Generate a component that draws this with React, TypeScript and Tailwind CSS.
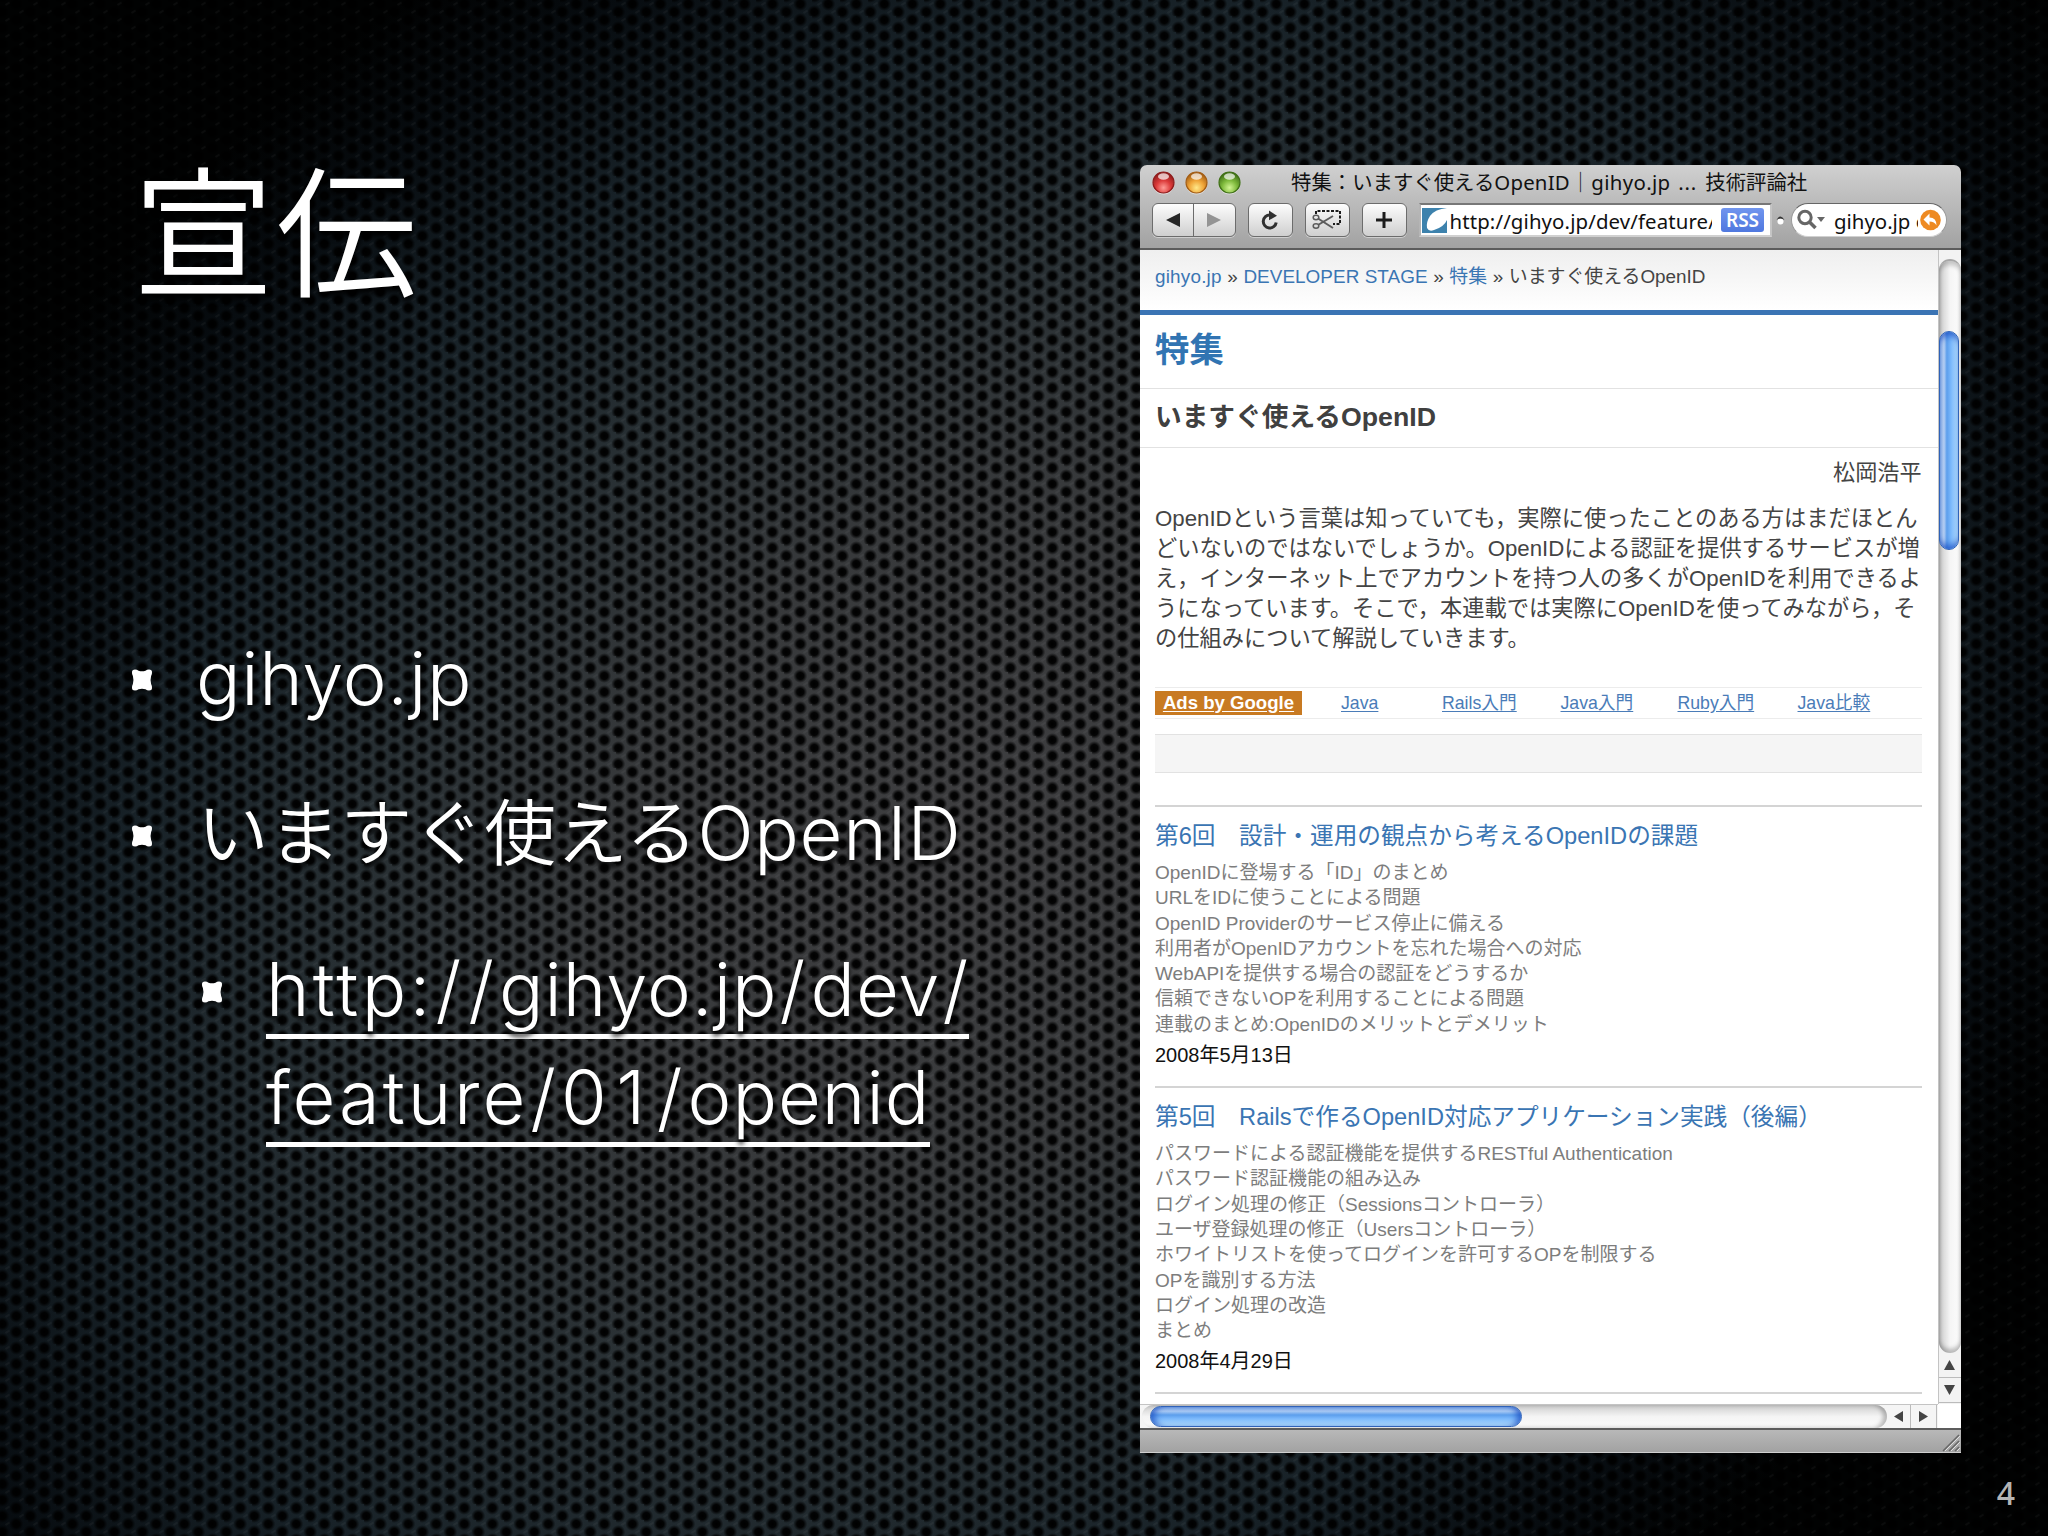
import React from 'react';

interface Article {
  title: string;
  topics: string[];
  date: string;
}

const INTRO_LINES = [
  'OpenIDという言葉は知っていても，実際に使ったことのある方はまだほとん',
  'どいないのではないでしょうか。OpenIDによる認証を提供するサービスが増',
  'え，インターネット上でアカウントを持つ人の多くがOpenIDを利用できるよ',
  'うになっています。そこで，本連載では実際にOpenIDを使ってみながら，そ',
  'の仕組みについて解説していきます。',
];

const ARTICLES: Article[] = [
  {
    title: '第6回　設計・運用の観点から考えるOpenIDの課題',
    topics: [
      'OpenIDに登場する「ID」のまとめ',
      'URLをIDに使うことによる問題',
      'OpenID Providerのサービス停止に備える',
      '利用者がOpenIDアカウントを忘れた場合への対応',
      'WebAPIを提供する場合の認証をどうするか',
      '信頼できないOPを利用することによる問題',
      '連載のまとめ:OpenIDのメリットとデメリット',
    ],
    date: '2008年5月13日',
  },
  {
    title: '第5回　Railsで作るOpenID対応アプリケーション実践（後編）',
    topics: [
      'パスワードによる認証機能を提供するRESTful Authentication',
      'パスワード認証機能の組み込み',
      'ログイン処理の修正（Sessionsコントローラ）',
      'ユーザ登録処理の修正（Usersコントローラ）',
      'ホワイトリストを使ってログインを許可するOPを制限する',
      'OPを識別する方法',
      'ログイン処理の改造',
      'まとめ',
    ],
    date: '2008年4月29日',
  },
];

/* Perforated metal: light comes from the middle, corners fall to black */
const Backdrop: React.FC = () => (
  <svg className="absolute inset-0" width="2048" height="1536" viewBox="0 0 2048 1536">
    <defs>
      <radialGradient id="light" gradientUnits="userSpaceOnUse" cx="0" cy="0" r="1" gradientTransform="translate(980 830) rotate(-38) scale(1350 1010)">
        <stop offset="0" stopColor="#3e3e40" />
        <stop offset="0.3" stopColor="#37393b" />
        <stop offset="0.52" stopColor="#272f33" />
        <stop offset="0.72" stopColor="#172127" />
        <stop offset="0.88" stopColor="#070c10" />
        <stop offset="1" stopColor="#010202" />
      </radialGradient>
      <radialGradient id="hole">
        <stop offset="0" stopColor="#000" />
        <stop offset="0.5" stopColor="#000" stopOpacity="0.92" />
        <stop offset="0.8" stopColor="#000" stopOpacity="0.35" />
        <stop offset="1" stopColor="#000" stopOpacity="0" />
      </radialGradient>
      <pattern id="mesh" width="28" height="16" patternUnits="userSpaceOnUse">
        <circle cx="2.3" cy="12" r="7" fill="url(#hole)" />
        <circle cx="16.3" cy="4" r="7" fill="url(#hole)" />
        <circle cx="2.3" cy="-4" r="7" fill="url(#hole)" />
        <circle cx="16.3" cy="20" r="7" fill="url(#hole)" />
        <circle cx="30.3" cy="12" r="7" fill="url(#hole)" />
        <path d="M5.500 5l4 -2.500M19.500 13l4 -2.500" stroke="#fff" strokeOpacity="0.04" strokeWidth="2" />
      </pattern>
    </defs>
    <rect width="2048" height="1536" fill="url(#light)" />
    <rect width="2048" height="1536" fill="url(#mesh)" />
  </svg>
);

const Bullet: React.FC = () => (
  <svg className="shrink-0 drop-shadow-[0_3px_3px_rgba(0,0,0,0.7)]" width="22" height="22" viewBox="0 0 22 22" fill="#fff">
    <path d="M1 3Q1 .5 4 .5Q6 .5 7.500 1.800Q11 2.800 14.500 1.800Q16 .5 18 .5Q21 .5 21 3Q21.200 5 20.100 7Q19 11 20.100 15Q21.200 17 21 19Q21 21.500 18 21.500Q16 21.500 14.500 20.200Q11 19.200 7.500 20.200Q6 21.500 4 21.500Q1 21.500 1 19Q.8 17 1.900 15Q3 11 1.900 7Q.8 5 1 3Z" />
  </svg>
);

const Light: React.FC<{ id: string; dark: string; mid: string; glow: string }> = ({ id, dark, mid, glow }) => (
  <svg width="23" height="24" viewBox="0 0 23 24">
    <defs>
      <radialGradient id={id} cx="0.5" cy="0.75" r="0.7">
        <stop offset="0" stopColor={glow} />
        <stop offset="0.5" stopColor={mid} />
        <stop offset="1" stopColor={dark} />
      </radialGradient>
    </defs>
    <circle cx="11.500" cy="12.500" r="11" fill="#fff" fillOpacity="0.45" />
    <circle cx="11.500" cy="11.500" r="10.500" fill={`url(#${id})`} stroke={dark} strokeWidth="1.200" />
    <ellipse cx="11.500" cy="5.500" rx="5.500" ry="3.200" fill="#fff" fillOpacity="0.7" />
  </svg>
);

const toolButton =
  'flex h-[34px] items-center justify-center rounded-[6px] border-[1.5px] border-[#6c6c6c] bg-linear-to-b from-[#fdfdfd] to-[#cfcfcf] shadow-[0_1px_0_rgba(255,255,255,0.45)]';

const Toolbar: React.FC = () => (
  <div className="flex h-[85px] flex-col rounded-t-[7px] border-b-2 border-[#5c5c5c] bg-linear-to-b from-[#d0d0d0] to-[#a2a2a2]">
    <div className="flex h-[34px] items-center pl-[12px]">
      <div className="flex gap-[10px] pt-[1px]">
        <Light id="close" dark="#8e1c1c" mid="#dc3b3a" glow="#ff9c96" />
        <Light id="minimize" dark="#a35d14" mid="#efa437" glow="#ffe98a" />
        <Light id="zoom" dark="#3f6f16" mid="#7fba3c" glow="#d2f593" />
      </div>
      <div className="ml-[50.500px] flex whitespace-pre text-[20.4px] leading-[34px] text-[#111]">
        <span>特集：いますぐ使える</span>
        <span className="w-[76px] tracking-[0.2px]">OpenID</span>
        <span className="w-[21px] font-light">｜</span>
        <span className="w-[87px] tracking-[0.35px]">gihyo.jp</span>
        <span className="w-[27px] tracking-[0.8px]">...</span>
        <span>技術評論社</span>
      </div>
    </div>
    <div className="flex pl-[12px] pt-[4px]">
      <div className={`${toolButton} w-[84px]`}>
        <div className="flex h-full flex-1 items-center justify-center border-r-[1.5px] border-[#6c6c6c]">
          <svg width="14" height="16" viewBox="0 0 14 16"><path d="M14 1v14L0 8z" fill="#262626" /></svg>
        </div>
        <div className="flex h-full flex-1 items-center justify-center">
          <svg width="14" height="16" viewBox="0 0 14 16"><path d="M0 1v14L14 8z" fill="#949494" /></svg>
        </div>
      </div>
      <div className={`${toolButton} ml-[12px] w-[45px]`}>
        <svg width="20" height="22" viewBox="0 0 20 22">
          <path d="M16.200 13.500A6.500 6.500 0 1 1 10 6" fill="none" stroke="#303030" strokeWidth="3" />
          <path d="M9 1.500l8 5.200l-8 4.600z" fill="#303030" />
        </svg>
      </div>
      <div className={`${toolButton} ml-[12px] w-[45px]`}>
        <svg width="30" height="22" viewBox="0 0 30 22" fill="none">
          <path d="M4 5V2H28V15H21" stroke="#1c1c1c" strokeWidth="2" strokeDasharray="3 1.500" />
          <g stroke="#5c5c5c" strokeWidth="1.500">
            <path d="M6 9.500L21 19M6 16L21 7" strokeWidth="2" />
            <ellipse cx="4" cy="8.500" rx="2.800" ry="2.200" />
            <ellipse cx="4" cy="17" rx="2.800" ry="2.200" />
          </g>
        </svg>
      </div>
      <div className={`${toolButton} ml-[12px] w-[45px]`}>
        <svg width="18" height="18" viewBox="0 0 18 18"><path d="M9 1v16M1 9h16" stroke="#1c1c1c" strokeWidth="3" /></svg>
      </div>
      <div className="ml-[12px] flex h-[34px] w-[353px] items-center border-2 border-t-[#777] border-r-[#c4c4c4] border-b-[#d0d0d0] border-l-[#b5b5b5] bg-white">
        <svg className="ml-[1px]" width="25" height="25" viewBox="0 0 25 25">
          <path d="M0 0H25Q13 1 8 8Q4 14 5 20Q7 24 12 22Q22 19 25 12V25H0Z" fill="#3d82ad" />
        </svg>
        <span className="ml-[3px] w-[262px] overflow-hidden whitespace-nowrap pt-[1px] text-[20.4px] leading-[30px] tracking-[0.12px] text-[#111]">http://gihyo.jp/dev/feature/0</span>
        <span className="ml-[9.500px] flex h-[24px] w-[43px] items-center justify-center rounded-[3px] bg-linear-to-b from-[#7195ee] to-[#4f78df] text-[19px] font-semibold text-white">RSS</span>
      </div>
      <svg className="ml-[4px] mt-[12px]" width="9" height="10" viewBox="0 0 9 10">
        <circle cx="4.500" cy="6.500" r="3" fill="#fff" />
        <path d="M.5 5Q4.500 -2 8.500 5Q4.500 2 .5 5Z" fill="#333" />
      </svg>
      <div className="ml-[6.500px] flex h-[34px] w-[156px] items-center rounded-full border-[1.5px] border-t-[#666] border-r-[#999] border-b-[#d0d0d0] border-l-[#999] bg-white">
        <svg className="ml-[5px]" width="29" height="22" viewBox="0 0 29 22">
          <circle cx="8" cy="8.500" r="6.200" fill="none" stroke="#666" strokeWidth="3" />
          <path d="M12.500 13l6 6" stroke="#666" strokeWidth="3.600" />
          <path d="M20 8h8l-4 5z" fill="#666" />
        </svg>
        <span className="ml-[8px] w-[84px] overflow-hidden whitespace-nowrap pt-[1px] text-[20.4px] leading-[30px] text-[#111]">gihyo.jp o</span>
        <svg className="ml-[2px]" width="21" height="22" viewBox="0 0 21 22">
          <circle cx="10.500" cy="11" r="10.300" fill="#ee8a22" />
          <path d="M9.500 4.500v4q7 0 7 8q-2 -4 -7 -4v4l-6 -6z" fill="#fff" />
        </svg>
      </div>
    </div>
  </div>
);

const ArticleItem: React.FC<{ article: Article }> = ({ article }) => (
  <div className="mx-[15.500px] border-t-2 border-[#d4d4d4]">
    <h3 className="mt-[13px] whitespace-nowrap text-[23.65px] leading-[32px] text-[#3a75b3]">{article.title}</h3>
    <ul className="mt-[8px] text-[19px] leading-[25.300px] text-[#7d7d7d]">
      {article.topics.map((topic) => (
        <li key={topic} className="whitespace-nowrap">{topic}</li>
      ))}
    </ul>
    <p className="mt-[2.500px] text-[20px] leading-[30px] text-[#111]">{article.date}</p>
  </div>
);

const Page: React.FC = () => (
  <div className="h-[1154px] w-[798px] overflow-hidden bg-white font-['Liberation_Sans','Noto_Sans_CJK_JP',sans-serif]">
    <div className="flex h-[65px] items-center gap-[5.600px] whitespace-nowrap border-b-[5px] border-[#3b74b4] bg-linear-to-b from-[#efefef] to-white pb-[6px] pl-[15.500px] text-[18.900px] text-[#444]">
      <span className="tracking-[0.2px] text-[#3a75b3]">gihyo.jp</span>
      <span>»</span>
      <span className="tracking-[0.05px] text-[#3a75b3]">DEVELOPER STAGE</span>
      <span>»</span>
      <span className="text-[#3a75b3]">特集</span>
      <span>»</span>
      <span>いますぐ使えるOpenID</span>
    </div>
    <h1 className="h-[74px] border-b border-[#e2e2e2] pl-[15.500px] text-[34.400px] font-bold leading-[70px] text-[#3174b2]">特集</h1>
    <h2 className="h-[59px] border-b border-[#e2e2e2] pl-[15.500px] text-[26.700px] font-bold leading-[57px] text-[#404040]">いますぐ使えるOpenID</h2>
    <p className="mt-[9px] pr-[16px] text-right text-[22.100px] leading-[32px] text-[#444]">松岡浩平</p>
    <div className="mt-[15px] pl-[15.500px] text-[22.250px] leading-[30px] text-[#444]">
      {INTRO_LINES.map((line) => (
        <p key={line} className="whitespace-nowrap">{line}</p>
      ))}
    </div>
    <div className="mx-[15.500px] mt-[33px] flex h-[32px] items-center border-y border-[#ececec] text-[17.700px] text-[#4a7cb8]">
      <span className="flex h-[24px] w-[147px] items-center justify-center bg-[#c87a22] pb-[1px] text-[18.600px] font-bold text-white underline underline-offset-2">Ads by Google</span>
      <span className="ml-[39px] w-[101px] underline underline-offset-2">Java</span>
      <span className="w-[118.500px] underline underline-offset-2">Rails入門</span>
      <span className="w-[117px] underline underline-offset-2">Java入門</span>
      <span className="w-[120px] underline underline-offset-2">Ruby入門</span>
      <span className="underline underline-offset-2">Java比較</span>
    </div>
    <div className="mx-[15.500px] mb-[32px] mt-[15px] h-[39px] border-y border-[#e2e2e2] bg-[#f5f5f5]" />
    <div className="flex flex-col gap-[16.500px]">
      {ARTICLES.map((article) => (
        <ArticleItem key={article.date} article={article} />
      ))}
      <div className="mx-[15.500px] h-[2px] bg-[#d4d4d4]" />
    </div>
  </div>
);

const VerticalScrollbar: React.FC = () => (
  <div className="flex h-[1154px] w-[23.500px] flex-col border-l border-[#c4c4c4] bg-[#f3f3f3]">
    <div className="mt-[9px] h-[1094px] rounded-[11px] border-t-2 border-[#a6a6a6] bg-linear-to-r from-[#c9c9c9] via-[#f5f5f5] to-[#fdfdfd] pt-[70px] shadow-[inset_0_-4px_4px_rgba(0,0,0,0.25),inset_0_4px_4px_rgba(0,0,0,0.2)]">
      <div className="h-[219px] w-[20.500px] rounded-full border-[1.5px] border-[#2f62b8] bg-[linear-gradient(90deg,#8fb3e8_0%,#b9d2f3_22%,#5c9eec_38%,#79b7fb_60%,#b5dffe_100%)] shadow-[inset_0_7px_6px_-3px_rgba(20,70,190,0.7),inset_0_-7px_6px_-3px_rgba(20,70,190,0.7)]" />
    </div>
    <div className="flex h-[25px] items-center justify-center border-b border-[#bbb]">
      <svg width="11" height="10" viewBox="0 0 11 10"><path d="M5.500 0L11 10H0z" fill="#444" /></svg>
    </div>
    <div className="flex h-[25px] items-center justify-center border-b border-[#bbb]">
      <svg width="11" height="10" viewBox="0 0 11 10"><path d="M5.500 10L11 0H0z" fill="#444" /></svg>
    </div>
  </div>
);

const HorizontalScrollbar: React.FC = () => (
  <div className="flex h-[24px] bg-white">
    <div className="flex h-[24px] w-[798px] border-t border-[#c4c4c4] bg-[#f5f5f5]">
      <div className="ml-[2px] w-[745px] rounded-[12px] bg-linear-to-b from-[#cdcdcd] via-[#f4f4f4] to-[#fcfcfc] pl-[8px] pt-[1px] shadow-[inset_-4px_0_4px_rgba(0,0,0,0.25)]">
        <div className="h-[21px] w-[372px] rounded-full border-[1.5px] border-[#2f62b8] bg-[linear-gradient(180deg,#7fa9e6_0%,#a9caf3_22%,#5c9eec_42%,#79b7fb_60%,#b5e0fe_100%)] shadow-[inset_7px_0_6px_-3px_rgba(20,70,190,0.7),inset_-7px_0_6px_-3px_rgba(20,70,190,0.7)]" />
      </div>
      <div className="flex w-[24px] items-center justify-center border-r border-[#bbb]">
        <svg width="9" height="11" viewBox="0 0 9 11"><path d="M0 5.500L9 0V11z" fill="#444" /></svg>
      </div>
      <div className="flex w-[26px] items-center justify-center border-r border-[#bbb]">
        <svg width="9" height="11" viewBox="0 0 9 11"><path d="M9 5.500L0 0V11z" fill="#444" /></svg>
      </div>
    </div>
  </div>
);

const BrowserWindow: React.FC = () => (
  <div className="w-[821.500px] font-['Noto_Sans','Noto_Sans_CJK_JP',sans-serif]">
    <Toolbar />
    <div className="flex bg-white">
      <Page />
      <VerticalScrollbar />
    </div>
    <HorizontalScrollbar />
    <div className="flex h-[25px] items-end justify-end border-b border-t-2 border-b-[#d0d0d0] border-t-[#5c5c5c] bg-linear-to-b from-[#b8b8b8] to-[#a2a2a2]">
      <svg width="20" height="18" viewBox="0 0 20 18" fill="none">
        <path d="M2 17L18 1M8 17L18 7M14 17L18 13" stroke="#666" strokeWidth="1.500" />
        <path d="M4 17L19 2M10 17L19 8M16 17L19 14" stroke="#e0e0e0" strokeWidth="1" />
      </svg>
    </div>
  </div>
);

const Slash: React.FC = () => <span className="ml-[2px] tracking-[5px]">/</span>;

export default function App() {
  return (
    <div className="relative h-[1536px] w-[2048px] overflow-hidden bg-black">
      <Backdrop />
      <div className="relative flex h-full">
        <div className="w-[1139.500px] pl-[131px] pt-[125px] font-['Inter','Noto_Sans_CJK_JP',sans-serif] font-[350] text-white">
          <h1 className="h-[200px] pl-[2px] font-['Noto_Sans_CJK_JP',sans-serif] text-[141px] font-[350] leading-[200px] tracking-[2px] [text-shadow:0_5px_6px_#000]">宣伝</h1>
          <ul className="mt-[301px] text-[74px] leading-[108px] tracking-[1px] [text-shadow:0_5px_5px_rgba(0,0,0,0.85)]">
            <li className="flex h-[108px] items-center">
              <Bullet />
              <span className="ml-[43px] pb-[5px] tracking-[0.700px]">gihyo.jp</span>
            </li>
            <li className="mt-[48px] flex h-[108px] items-center whitespace-nowrap">
              <Bullet />
              <span className="ml-[44px] pb-[7px] text-[71.800px] tracking-[0px]">いますぐ使える</span>
              <span className="pb-[7px] tracking-[0.700px]">OpenID</span>
            </li>
            <li className="mt-[48px] flex items-start pl-[70px]">
              <span className="flex h-[108px] items-center">
                <Bullet />
              </span>
              <div className="-mt-[3px] ml-[43px]">
                <div className="h-[108px] whitespace-nowrap">
                  <span className="border-b-[5px] border-white"><span className="tracking-[3.200px]">http:</span><Slash /><Slash />gihyo.jp<Slash />dev<span className="ml-[2px] tracking-[1px]">/</span></span>
                </div>
                <div className="h-[108px] whitespace-nowrap">
                  <span className="border-b-[5px] border-white"><span className="tracking-[2.900px]">feature</span><Slash /><span className="tracking-[9.500px]">01</span><Slash /><span className="tracking-[1px]">openid</span></span>
                </div>
              </div>
            </li>
          </ul>
        </div>
        <div className="flex w-[908.500px] flex-col pt-[165px]">
          <BrowserWindow />
          <div className="mr-[33px] mt-[20px] text-right font-['Noto_Sans',sans-serif] text-[32px] font-medium leading-[40px] text-[#b4b4b4]">4</div>
        </div>
      </div>
    </div>
  );
}
